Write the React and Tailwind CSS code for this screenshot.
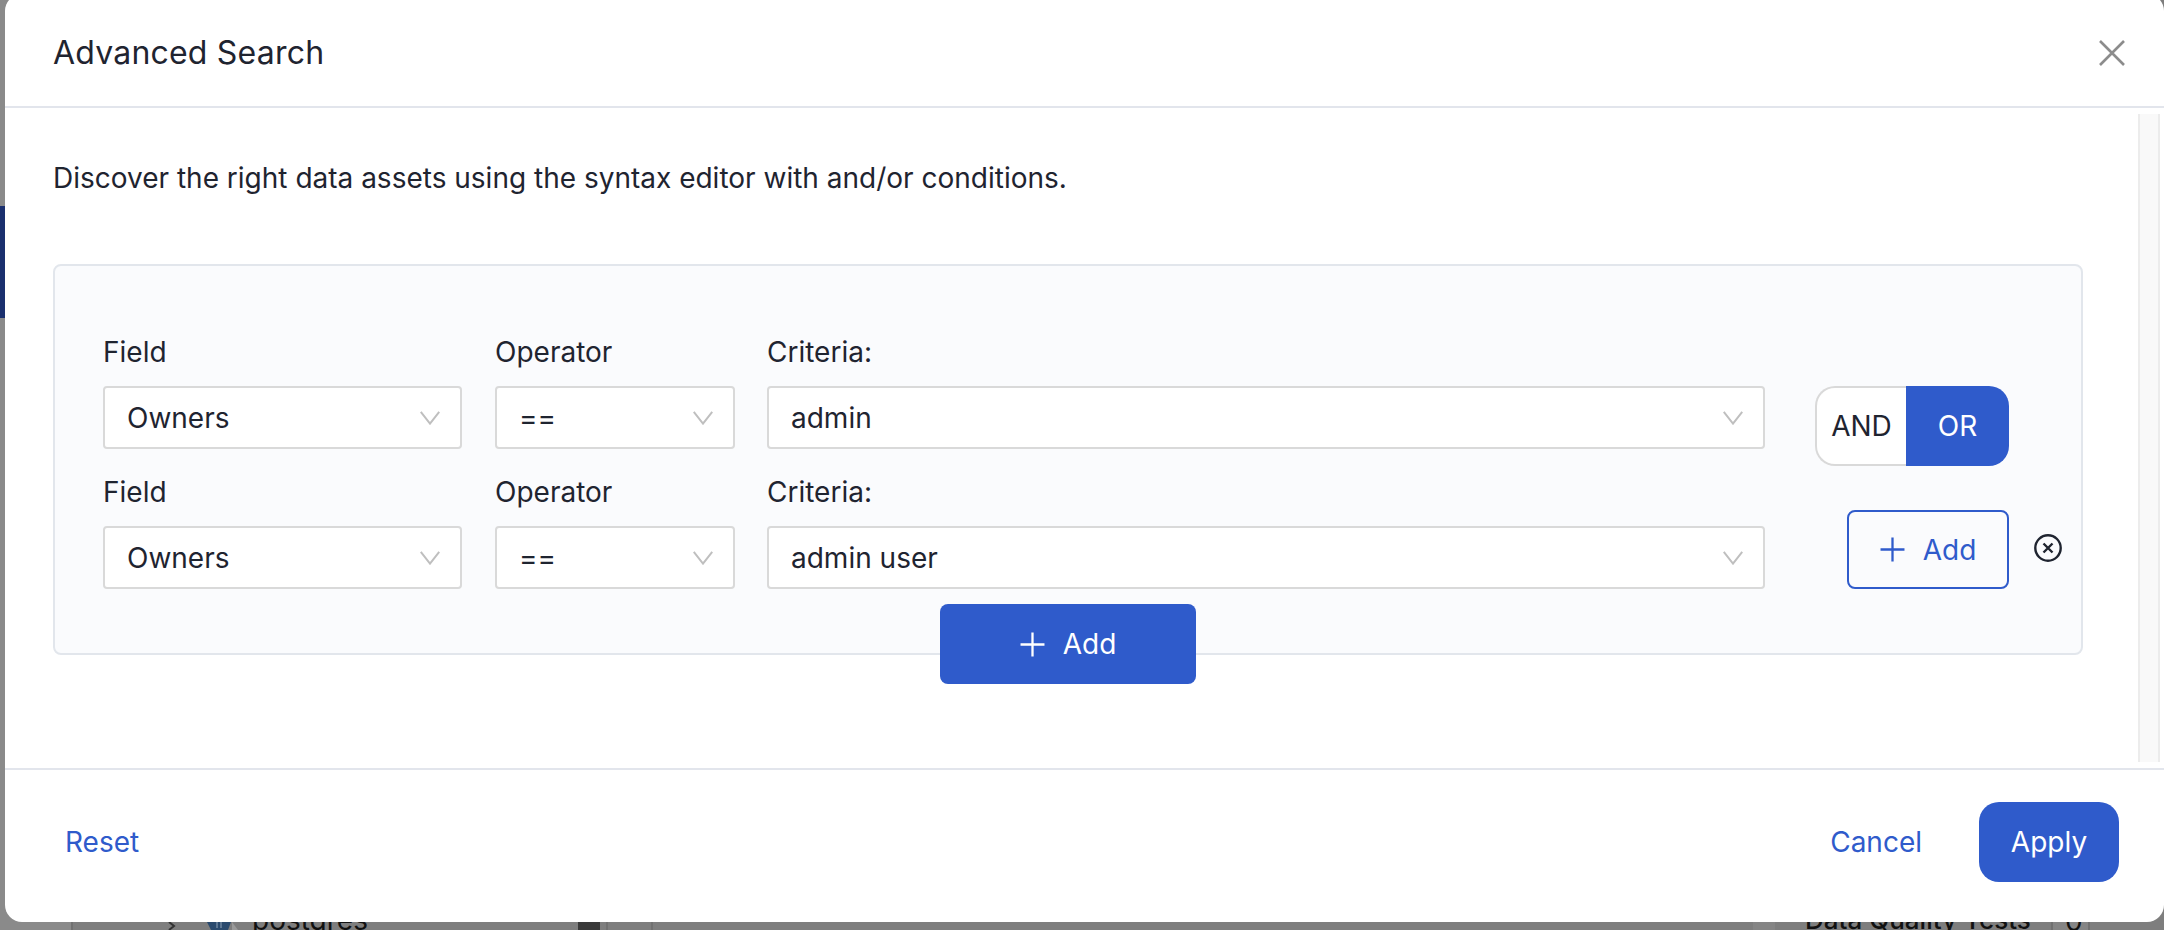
import React from 'react'

const font = { fontFamily: 'Inter, sans-serif' }

function Chevron() {
  return (
    <svg className="w-[20px] h-[14px] shrink-0" viewBox="0 0 20 14" fill="none" stroke="#bfbfbf" strokeWidth="2">
      <path d="M0.8 0.8 L10 12.6 L19.2 0.8" />
    </svg>
  )
}

function Plus({ className }) {
  return (
    <svg className={className} viewBox="0 0 24 24" fill="none" stroke="currentColor" strokeWidth="2.2">
      <path d="M12 0.5v23M0.5 12h23" />
    </svg>
  )
}

function Select({ value }) {
  return (
    <div className="h-[63px] flex items-center justify-between pl-[22px] pr-[20px] bg-white border-2 border-[#d9d9d9] rounded-[4px]">
      <span>{value}</span>
      <Chevron />
    </div>
  )
}

function Field({ label, value, className }) {
  return (
    <div className={className}>
      <div className="h-[77px] leading-[34px] pt-[26px]">{label}</div>
      <Select value={value} />
    </div>
  )
}

function Row({ criteria, children }) {
  return (
    <div className="flex h-[140px]">
      <Field label="Field" value="Owners" className="w-[359px] mr-[33px]" />
      <Field label="Operator" value="==" className="w-[240px] mr-[32px]" />
      <Field label="Criteria:" value={criteria} className="w-[998px]" />
      {children}
    </div>
  )
}

export default function App() {
  return (
    <div style={font} className="relative w-[2164px] h-[930px] overflow-hidden bg-[#7e7e7e] text-[28px] text-[#1f2430]">
      {/* page behind the modal, only its edge shows */}
      <div className="absolute left-0 top-0 w-[73px] h-[930px] bg-[#8a8a8a] border-r-2 border-[#717171]" />
      <div className="absolute left-0 top-[206px] w-[5px] h-[112px] bg-[#1a2f6e]" />
      <svg className="absolute left-[168px] top-[922px] w-[8px] h-[8px]" viewBox="0 0 8 8" fill="none" stroke="#333" strokeWidth="2">
        <path d="M1 0l5 4-5 4" />
      </svg>
      <svg className="absolute left-[206px] top-[922px] w-[34px] h-[8px]" viewBox="0 0 34 8">
        <path d="M1 0h24l-3 8H5z" fill="#2a4a6e" />
        <path d="M11 0v6M15 0v6" stroke="#8fa3b8" strokeWidth="1" />
        <path d="M26 0l6 8h-6z" fill="#9a9a9a" />
      </svg>
      <div className="absolute left-[252px] top-[899px] text-[#111]">postgres</div>
      <div className="absolute left-[578px] top-[920px] w-[22px] h-[10px] bg-[#3a3a3a]" />
      <div className="absolute left-[606px] top-[920px] w-[47px] h-[10px] border-x-2 border-[#717171]" />
      <div className="absolute left-[1753px] top-[920px] w-[22px] h-[10px] bg-[#858585]" />
      <div className="absolute left-[1805px] top-[900px] text-[26px] font-medium text-[#111]">Data Quality Tests</div>
      <div className="absolute left-[2051px] top-[920px] w-[39px] h-[10px] bg-[#858585] border-x-2 border-[#717171]" />
      <div className="absolute left-[2065px] top-[900px] text-[#111]">0</div>

      <div className="relative ml-[5px] -mt-[6px] h-[928px] bg-white rounded-[17px] flex flex-col">
        <div className="h-[114px] shrink-0 pl-[48px] pr-[39px] pt-[6px] flex items-center justify-between border-b-2 border-[#e2e5ec]">
          <div className="text-[32px] leading-[40px] tracking-[0.2px]">Advanced Search</div>
          <svg className="w-[26px] h-[26px] text-[#8c8c8c]" viewBox="0 0 26 26" fill="none" stroke="currentColor" strokeWidth="2.6">
            <path d="M1 1l24 24M25 1L1 25" />
          </svg>
        </div>

        <div className="flex-1 flex min-h-0">
          <div className="w-[2133px] pl-[48px] pt-[52px]">
            <p className="leading-[36px]">Discover the right data assets using the syntax editor with and/or conditions.</p>
            <div className="mt-[68px] w-[2030px] h-[391px] pl-[48px] pt-[43px] bg-[#fafbfd] border-2 border-[#e2e6ec] rounded-[8px] flex flex-col">
              <div className="flex flex-col shrink-0">
                <Row criteria="admin">
                  <div className="ml-[50px] mt-[77px] h-[80px] w-[194px] shrink-0 flex">
                    <div className="w-[91px] bg-white border-2 border-r-0 border-[#d9d9d9] rounded-l-[20px] flex items-center justify-center">AND</div>
                    <div className="flex-1 bg-[#2f5bcb] text-white rounded-r-[20px] flex items-center justify-center">OR</div>
                  </div>
                </Row>
                <Row criteria="admin user">
                  <div className="ml-[82px] mt-[61px] h-[79px] w-[162px] shrink-0 border-2 border-[#2f5bcb] rounded-[8px] text-[#2f5bcb] flex items-center justify-center gap-[18px]">
                    <Plus className="w-[25px] h-[25px]" />
                    <span>Add</span>
                  </div>
                  <svg className="ml-[25px] mt-[85px] w-[28px] h-[28px] shrink-0" viewBox="0 0 28 28" fill="none" stroke="#1f2430" strokeWidth="2.4">
                    <circle cx="14" cy="14" r="12.7" />
                    <path d="M9.5 9.5l9 9M18.5 9.5l-9 9" />
                  </svg>
                </Row>
              </div>
              <div className="-ml-[48px] mt-[15px] self-center h-[80px] w-[256px] shrink-0 rounded-[8px] bg-[#2f5bcb] text-white flex items-center justify-center gap-[18px]">
                <Plus className="w-[25px] h-[25px]" />
                <span>Add</span>
              </div>
            </div>
          </div>
          <div className="mt-[6px] mb-[6px] w-[22px] bg-[#f9f9f9] border-x-2 border-[#ececec]" />
        </div>

        <div className="h-[154px] shrink-0 pl-[60px] pr-[45px] pb-[8px] flex items-center justify-between border-t-2 border-[#e2e5ec]">
          <span className="text-[#2f5bcb]">Reset</span>
          <div className="flex items-center gap-[57px]">
            <span className="text-[#2f5bcb]">Cancel</span>
            <div className="h-[80px] w-[140px] rounded-[20px] bg-[#2f5bcb] text-white flex items-center justify-center">Apply</div>
          </div>
        </div>
      </div>
    </div>
  )
}
